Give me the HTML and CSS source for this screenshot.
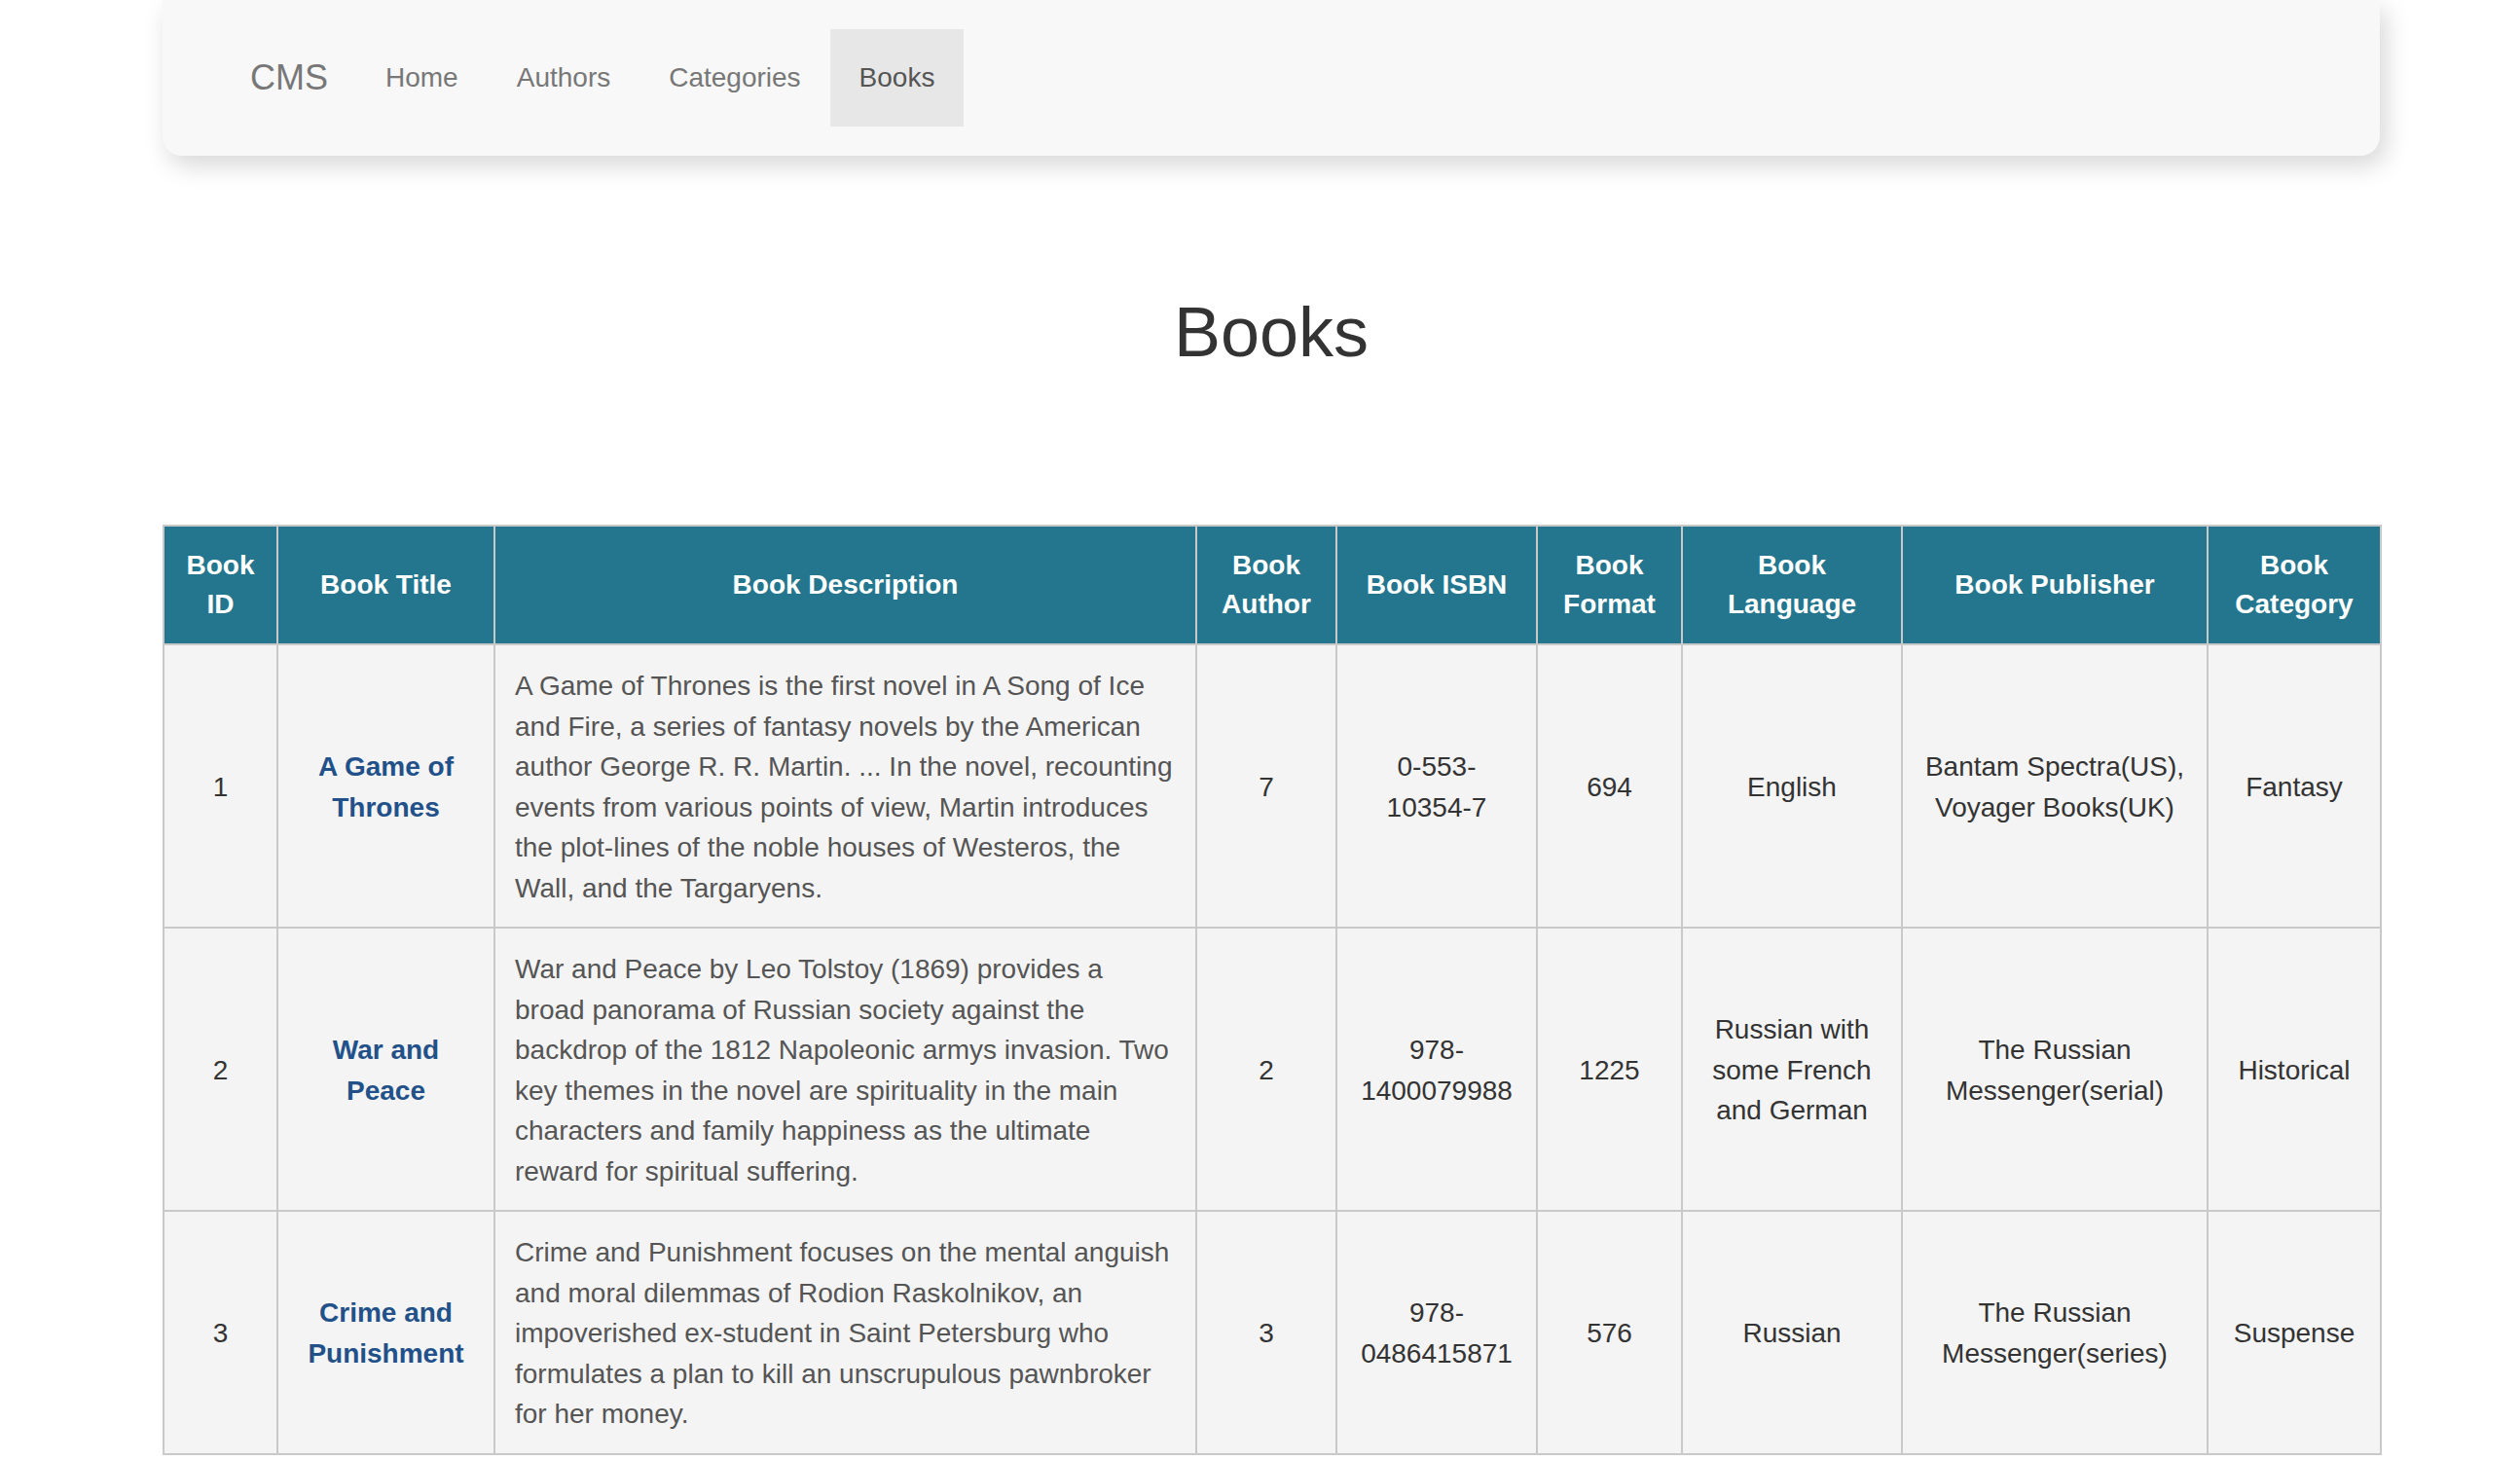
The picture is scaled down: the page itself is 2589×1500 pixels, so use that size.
FILE: index.html
```html
<!DOCTYPE html>
<html lang="en">
<head>
<meta charset="utf-8">
<title>Books - CMS</title>
<link rel="stylesheet" href="styles.css">
</head>
<body>
<div class="page">
  <nav class="navbar">
    <a class="brand" href="#">CMS</a>
    <ul class="nav-links">
      <li><a href="#">Home</a></li>
      <li><a href="#">Authors</a></li>
      <li><a href="#">Categories</a></li>
      <li class="active"><a href="#">Books</a></li>
    </ul>
  </nav>

  <h1 class="page-title">Books</h1>

  <table class="books">
    <colgroup>
      <col class="c-id">
      <col class="c-title">
      <col class="c-desc">
      <col class="c-author">
      <col class="c-isbn">
      <col class="c-format">
      <col class="c-lang">
      <col class="c-pub">
      <col class="c-cat">
    </colgroup>
    <thead>
      <tr>
        <th>Book ID</th>
        <th>Book Title</th>
        <th>Book Description</th>
        <th>Book Author</th>
        <th>Book ISBN</th>
        <th>Book Format</th>
        <th>Book Language</th>
        <th>Book Publisher</th>
        <th>Book Category</th>
      </tr>
    </thead>
    <tbody>
      <tr>
        <td>1</td>
        <td><a class="title" href="#">A Game of Thrones</a></td>
        <td class="desc">A Game of Thrones is the first novel in A Song of Ice and Fire, a series of fantasy novels by the American author George R. R. Martin. ... In the novel, recounting events from various points of view, Martin introduces the plot-lines of the noble houses of Westeros, the Wall, and the Targaryens.</td>
        <td>7</td>
        <td>0-553-10354-7</td>
        <td>694</td>
        <td>English</td>
        <td>Bantam Spectra(US), Voyager Books(UK)</td>
        <td>Fantasy</td>
      </tr>
      <tr>
        <td>2</td>
        <td><a class="title" href="#">War and Peace</a></td>
        <td class="desc">War and Peace by Leo Tolstoy (1869) provides a broad panorama of Russian society against the backdrop of the 1812 Napoleonic armys invasion. Two key themes in the novel are spirituality in the main characters and family happiness as the ultimate reward for spiritual suffering.</td>
        <td>2</td>
        <td>978-1400079988</td>
        <td>1225</td>
        <td>Russian with some French and German</td>
        <td>The Russian Messenger(serial)</td>
        <td>Historical</td>
      </tr>
      <tr>
        <td>3</td>
        <td><a class="title" href="#">Crime and Punishment</a></td>
        <td class="desc">Crime and Punishment focuses on the mental anguish and moral dilemmas of Rodion Raskolnikov, an impoverished ex-student in Saint Petersburg who formulates a plan to kill an unscrupulous pawnbroker for her money.</td>
        <td>3</td>
        <td>978-0486415871</td>
        <td>576</td>
        <td>Russian</td>
        <td>The Russian Messenger(series)</td>
        <td>Suspense</td>
      </tr>
    </tbody>
  </table>
</div>
</body>
</html>
```

FILE: styles.css
```css
html, body {
  margin: 0;
  padding: 0;
  background: #ffffff;
}

body {
  font-family: "Liberation Sans", Arial, Helvetica, sans-serif;
  font-size: 28px;
  line-height: 40px;
  color: #333333;
}

.page {
  width: 2278px;
  margin-left: 167px;
}

/* Navbar */
.navbar {
  display: flex;
  align-items: center;
  height: 160px;
  box-sizing: border-box;
  padding: 30px 0 30px 60px;
  background: #f8f8f8;
  border-radius: 0 0 20px 20px;
  box-shadow: 6px 10px 26px rgba(0, 0, 0, 0.16);
}

.brand {
  display: block;
  padding: 30px 30px;
  font-size: 36px;
  line-height: 40px;
  color: #777777;
  text-decoration: none;
}

.nav-links {
  display: flex;
  list-style: none;
  margin: 0 0 0 -1px;
  padding: 0;
}

.nav-links a {
  display: block;
  padding: 30px 30px;
  font-size: 28px;
  line-height: 40px;
  color: #777777;
  text-decoration: none;
}

.nav-links .active a {
  background: #e7e7e7;
  color: #555555;
}

/* Title */
.page-title {
  margin: 142px 0 158px;
  font-size: 72px;
  font-weight: 400;
  line-height: 1.1;
  text-align: center;
  color: #333333;
}

/* Table */
.books {
  width: 2278px;
  table-layout: fixed;
  border-collapse: collapse;
  background: #f4f4f4;
  border: 2px solid #c6c6c6;
}

.c-id { width: 117px; }
.c-title { width: 223px; }
.c-desc { width: 721px; }
.c-author { width: 144px; }
.c-isbn { width: 206px; }
.c-format { width: 149px; }
.c-lang { width: 226px; }
.c-pub { width: 314px; }
.c-cat { width: 178px; }

.books th,
.books td {
  border: 2px solid #c9c9c9;
  text-align: center;
  vertical-align: middle;
}

.books th {
  background: #24768e;
  color: #ffffff;
  font-weight: 700;
  line-height: 40px;
  padding: 20px 20px;
}

.books td {
  line-height: 41.5px;
  padding: 21px 20px 19px;
  color: #333333;
}

.books td.desc {
  text-align: left;
  color: #555555;
}

.title {
  color: #22518a;
  font-weight: 700;
  text-decoration: none;
}
```
